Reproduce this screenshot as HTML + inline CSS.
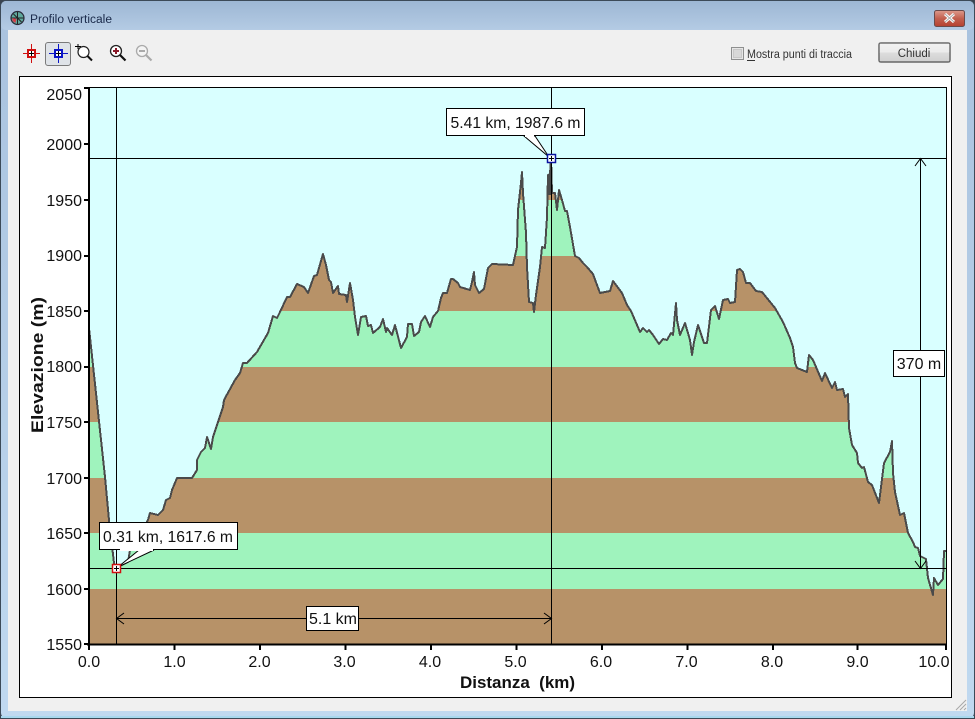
<!DOCTYPE html>
<html><head><meta charset="utf-8"><title>Profilo verticale</title>
<style>
html,body{margin:0;padding:0;width:975px;height:719px;overflow:hidden;background:#3a4450}
svg{display:block}
text{font-family:"Liberation Sans",sans-serif;fill:#111}
</style></head><body>
<svg width="975" height="719" viewBox="0 0 975 719" xmlns="http://www.w3.org/2000/svg">
<defs>
<linearGradient id="tb" x1="0" y1="0" x2="0" y2="1"><stop offset="0" stop-color="#9db7d4"/><stop offset="1" stop-color="#b4cbe4"/></linearGradient>
<linearGradient id="side" x1="0" y1="0" x2="0" y2="1"><stop offset="0" stop-color="#a9c2de"/><stop offset="1" stop-color="#c0d9f0"/></linearGradient>
<linearGradient id="cl" x1="0" y1="0" x2="0" y2="1"><stop offset="0" stop-color="#dd9a8c"/><stop offset=".5" stop-color="#c2604f"/><stop offset="1" stop-color="#b5402f"/></linearGradient>
<linearGradient id="btn" x1="0" y1="0" x2="0" y2="1"><stop offset="0" stop-color="#f2f2f2"/><stop offset=".5" stop-color="#ebebeb"/><stop offset=".5" stop-color="#dddddd"/><stop offset="1" stop-color="#cfcfcf"/></linearGradient>
<clipPath id="prof"><polygon points="89,328 105,477 109,520 114,563 116,568 128,562 130,550 148,520 150,513 158,515 163,510 166,500 170,498 172,490 177,478 185,478 192,478 197,470 197,460 201,452 205,448 207,437 211,449 213,437 216,428 223,407 224,400 235,380 240,373 243,363 247,363 257,352 268,333 273,316 277,318 280,312 287,297 290,297 297,284 304,287 308,293 314,276 317,275 323,254 326,265 329,280 331,282 333,293 338,286 339,294 346,295 347,302 350,283 353,300 355,317 358,335 361,317 366,316 368,326 371,325 373,333 380,327 383,319 386,332 387,328 392,335 395,325 401,348 407,337 408,324 412,324 414,336 419,332 421,322 425,316 430,327 433,317 438,311 441,298 443,293 447,293 451,279 453,279 458,283 460,287 470,290 472,282 474,272 475,285 479,293 484,289 488,268 492,264 513,265 517,247 518,210 521,183 522,172 523,193 526,233 527,267 529,302 533,303 534,312 536,295 538,281 540,267 542,247 545,248 547,217 548,175 550,174 551,158 552,193 555,193 557,210 559,190 562,200 565,211 567,211 570,227 575,256 579,258 583,263 587,267 593,274 597,285 600,293 610,291 613,281 622,293 627,305 631,311 637,325 640,332 643,328 647,332 649,330 653,335 659,344 663,339 667,340 671,333 673,335 676,303 677,320 680,335 685,323 690,340 692,355 694,342 698,325 704,343 707,343 711,310 715,306 719,319 723,300 728,299 730,303 735,302 737,270 740,269 743,272 746,283 750,283 756,291 762,292 775,308 783,322 790,338 793,347 795,363 797,368 807,372 809,355 813,360 822,381 825,373 832,388 835,382 837,390 843,389 845,397 848,394 849,428 852,445 857,453 858,463 862,468 864,467 868,482 872,485 879,503 884,463 890,452 892,441 893,473 895,492 900,515 904,513 908,533 913,542 915,547 918,548 920,556 926,559 928,578 933,595 934,578 938,585 943,579 944,551 946,551 946,644 89,644"/></clipPath>
</defs>

<!-- window frame -->
<rect x="0" y="0" width="975" height="719" rx="6" fill="#3c4a58"/>
<rect x="1" y="1" width="973" height="717" rx="5" fill="url(#side)"/>
<rect x="1" y="1" width="973" height="29" rx="5" fill="url(#tb)"/>
<rect x="1" y="716" width="973" height="2" fill="#a8d8ee"/>
<rect x="8" y="30" width="959" height="681" fill="#f0f0f0"/>

<!-- title -->
<g transform="translate(17.500,18)">
<circle r="6.500" fill="#5fa89c" stroke="#2a2a3a" stroke-width="1.200"/>
<path d="M-6 0H6M0-6V6M-4-4L4 4" stroke="#222" stroke-width="1" fill="none"/>
<path d="M-5 0L-1 1L-2 5L-5 3Z" fill="#d0404a"/>
</g>
<text x="30" y="23" font-size="11.500" textLength="82" lengthAdjust="spacingAndGlyphs" style="fill:#1a2a4a">Profilo verticale</text>

<!-- close button -->
<rect x="934.500" y="10.500" width="30" height="16" rx="2" fill="url(#cl)" stroke="#6a4a4a"/>
<path d="M945 14L954 22M954 14L945 22" stroke="#fff" stroke-width="3"/>
<path d="M945 14L954 22M954 14L945 22" stroke="#555" stroke-width="1" opacity=".5"/>

<!-- toolbar -->
<g fill="none" stroke="#d01010" stroke-width="1">
<path d="M23 53.500H40M31.500 44V63"/>
<rect x="28" y="50" width="7" height="7" fill="#fff" stroke-width="2"/>
</g>
<path d="M29 53.500H34M31.500 51V56" stroke="#000" fill="none"/>
<rect x="45.500" y="42.500" width="25" height="23" rx="2.500" fill="#dfe3e8" stroke="#7a7a7a"/>
<g fill="none" stroke="#0a14c8" stroke-width="1">
<path d="M49 53.500H68M58.500 44V63"/>
<rect x="55" y="50" width="7" height="7" fill="#fff" stroke-width="2"/>
</g>
<path d="M56 53.500H61M58.500 51V56" stroke="#000" fill="none"/>
<path d="M75 46.500H81M78 44V49" stroke="#000" fill="none"/>
<circle cx="83.500" cy="52" r="5.500" fill="#fff" stroke="#222" stroke-width="1.200"/>
<path d="M87.500 56L92 60.500" stroke="#111" stroke-width="2"/>
<circle cx="116" cy="51" r="5.500" fill="#fff" stroke="#222" stroke-width="1.300"/>
<path d="M113 51H119M116 48V54" stroke="#8a1a2a" stroke-width="2"/>
<path d="M120 55L125.500 60.500" stroke="#111" stroke-width="2.200"/>
<circle cx="142" cy="51" r="5.500" fill="#f4f4f4" stroke="#aaa" stroke-width="1.300"/>
<path d="M139 51H145" stroke="#aaa" stroke-width="2"/>
<path d="M146 55L151.500 60.500" stroke="#aaa" stroke-width="2.200"/>

<!-- checkbox -->
<rect x="731.500" y="47.500" width="12" height="12" fill="#e6e6e6" stroke="#8e8f8f"/>
<rect x="733.500" y="49.500" width="8" height="8" fill="#d8d8d8" stroke="#c8c8c8"/>
<text x="747" y="58" font-size="11.500" textLength="105" lengthAdjust="spacingAndGlyphs" style="fill:#333">Mostra punti di traccia</text>
<path d="M747 60.500H755" stroke="#333"/>

<!-- Chiudi -->
<rect x="878.500" y="42.500" width="72" height="20" rx="2.500" fill="url(#btn)" stroke="#8a8a8a"/>
<rect x="879.500" y="43.500" width="70" height="18" fill="none" stroke="#333" stroke-dasharray="1 1"/>
<text x="914" y="57" font-size="11.500" text-anchor="middle" style="fill:#333">Chiudi</text>

<!-- chart panel -->
<rect x="19.500" y="76.500" width="932" height="621" fill="#fff" stroke="#000"/>
<rect x="89" y="88" width="857" height="556" fill="#d9ffff"/>

<g clip-path="url(#prof)">
<rect x="89" y="88" width="857" height="556" fill="#9ff3bd"/>
<g fill="#b79268">
<rect x="89" y="589" width="858" height="56"/>
<rect x="89" y="478" width="858" height="55"/>
<rect x="89" y="367" width="858" height="55"/>
<rect x="89" y="256" width="858" height="55"/>
<rect x="89" y="144" width="858" height="56"/>
</g>
</g>

<!-- profile line -->
<polyline fill="none" stroke="#4a4a4a" stroke-width="2" stroke-linejoin="round" shape-rendering="crispEdges" points="89,328 105,477 109,520 114,563 116,568 128,562 130,550 148,520 150,513 158,515 163,510 166,500 170,498 172,490 177,478 185,478 192,478 197,470 197,460 201,452 205,448 207,437 211,449 213,437 216,428 223,407 224,400 235,380 240,373 243,363 247,363 257,352 268,333 273,316 277,318 280,312 287,297 290,297 297,284 304,287 308,293 314,276 317,275 323,254 326,265 329,280 331,282 333,293 338,286 339,294 346,295 347,302 350,283 353,300 355,317 358,335 361,317 366,316 368,326 371,325 373,333 380,327 383,319 386,332 387,328 392,335 395,325 401,348 407,337 408,324 412,324 414,336 419,332 421,322 425,316 430,327 433,317 438,311 441,298 443,293 447,293 451,279 453,279 458,283 460,287 470,290 472,282 474,272 475,285 479,293 484,289 488,268 492,264 513,265 517,247 518,210 521,183 522,172 523,193 526,233 527,267 529,302 533,303 534,312 536,295 538,281 540,267 542,247 545,248 547,217 548,175 550,174 551,158 552,193 555,193 557,210 559,190 562,200 565,211 567,211 570,227 575,256 579,258 583,263 587,267 593,274 597,285 600,293 610,291 613,281 622,293 627,305 631,311 637,325 640,332 643,328 647,332 649,330 653,335 659,344 663,339 667,340 671,333 673,335 676,303 677,320 680,335 685,323 690,340 692,355 694,342 698,325 704,343 707,343 711,310 715,306 719,319 723,300 728,299 730,303 735,302 737,270 740,269 743,272 746,283 750,283 756,291 762,292 775,308 783,322 790,338 793,347 795,363 797,368 807,372 809,355 813,360 822,381 825,373 832,388 835,382 837,390 843,389 845,397 848,394 849,428 852,445 857,453 858,463 862,468 864,467 868,482 872,485 879,503 884,463 890,452 892,441 893,473 895,492 900,515 904,513 908,533 913,542 915,547 918,548 920,556 926,559 928,578 933,595 934,578 938,585 943,579 944,551 946,551"/>
<path d="M549 175V195M551 175V195" stroke="#4a4a4a" stroke-width="2"/>

<!-- axes -->
<path d="M946.500 87V645M88 87.500H947" stroke="#000" fill="none"/>
<path d="M89 87V646M87 644.500H947" stroke="#000" stroke-width="2" fill="none"/>
<g stroke="#000" stroke-width="2" fill="none">
<path d="M84 88H89M84 144H89M84 200H89M84 256H89M84 311H89M84 367H89M84 422H89M84 478H89M84 533H89M84 589H89M84 644H89"/>
<path d="M89 644V650M174.500 644V650M260 644V650M345.500 644V650M431 644V650M516.500 644V650M602 644V650M687.500 644V650M773 644V650M857.500 644V650M946 644V650"/>
</g>

<!-- y labels -->
<g font-size="16" text-anchor="end">
<text x="82" y="100">2050</text><text x="82" y="150">2000</text><text x="82" y="206">1950</text><text x="82" y="261">1900</text><text x="82" y="317">1850</text><text x="82" y="372">1800</text><text x="82" y="428">1750</text><text x="82" y="484">1700</text><text x="82" y="539">1650</text><text x="82" y="595">1600</text><text x="82" y="650">1550</text>
</g>
<!-- x labels -->
<g font-size="16" text-anchor="middle">
<text x="89" y="667">0.0</text><text x="174.500" y="667">1.0</text><text x="259.500" y="667">2.0</text><text x="344.500" y="667">3.0</text><text x="430" y="667">4.0</text><text x="515.500" y="667">5.0</text><text x="601" y="667">6.0</text><text x="686.500" y="667">7.0</text><text x="772" y="667">8.0</text><text x="857.500" y="667">9.0</text><text x="934" y="667">10.0</text>
</g>
<text x="460" y="688" font-size="17" font-weight="bold" textLength="115" lengthAdjust="spacingAndGlyphs" xml:space="preserve">Distanza  (km)</text>
<text transform="translate(43,433) rotate(-90)" font-size="17" font-weight="bold" textLength="136" lengthAdjust="spacingAndGlyphs">Elevazione (m)</text>

<!-- crosshairs -->
<g stroke="#000" fill="none">
<path d="M116.500 87V644M551.500 87V644M89 568.500H946M89 158.500H946"/>
<path d="M116 618.500H551M124 613L116.500 618.500L124 624M544 613L551.500 618.500L544 624"/>
<path d="M920.500 158V568M915 166L920.500 158.500L926 166M915 561L920.500 568.500L926 561"/>
</g>

<!-- measure labels -->
<rect x="306.500" y="606.500" width="52" height="24" fill="#fff" stroke="#000"/>
<text x="333" y="624" font-size="16" text-anchor="middle">5.1 km</text>
<rect x="893.500" y="350.500" width="51" height="26" fill="#fff" stroke="#000"/>
<text x="919" y="369" font-size="16" text-anchor="middle">370 m</text>

<!-- callouts -->
<path d="M139 550L118 567L154 550Z" fill="#fff" stroke="#000"/>
<rect x="99.500" y="522.500" width="138" height="27" fill="#fff" stroke="#000"/>
<rect x="120" y="548" width="33" height="3" fill="#fff"/>
<text x="168" y="542" font-size="16" text-anchor="middle" textLength="130" lengthAdjust="spacingAndGlyphs">0.31 km, 1617.6 m</text>

<path d="M524 136L549 157L535 136Z" fill="#fff" stroke="#000"/>
<rect x="446.500" y="108.500" width="138" height="27" fill="#fff" stroke="#000"/>
<rect x="525" y="134" width="9" height="3" fill="#fff"/>
<text x="515.500" y="128" font-size="16" text-anchor="middle" textLength="130" lengthAdjust="spacingAndGlyphs">5.41 km, 1987.6 m</text>

<!-- markers -->
<rect x="112.500" y="564.500" width="8" height="8" fill="#fff" stroke="#d01010" stroke-width="1.500"/>
<path d="M114 568.500H119M116.500 566V571" stroke="#000" fill="none"/>
<rect x="547.500" y="154.500" width="8" height="8" fill="#fff" stroke="#0a14a0" stroke-width="1.500"/>
<path d="M549 158.500H554M551.500 156V161" stroke="#000" fill="none"/>

<!-- resize grip -->
<path d="M956 710L966 700M960 710L966 704M964 710L966 708" stroke="#a8a8a8" fill="none"/>
</svg>
</body></html>
